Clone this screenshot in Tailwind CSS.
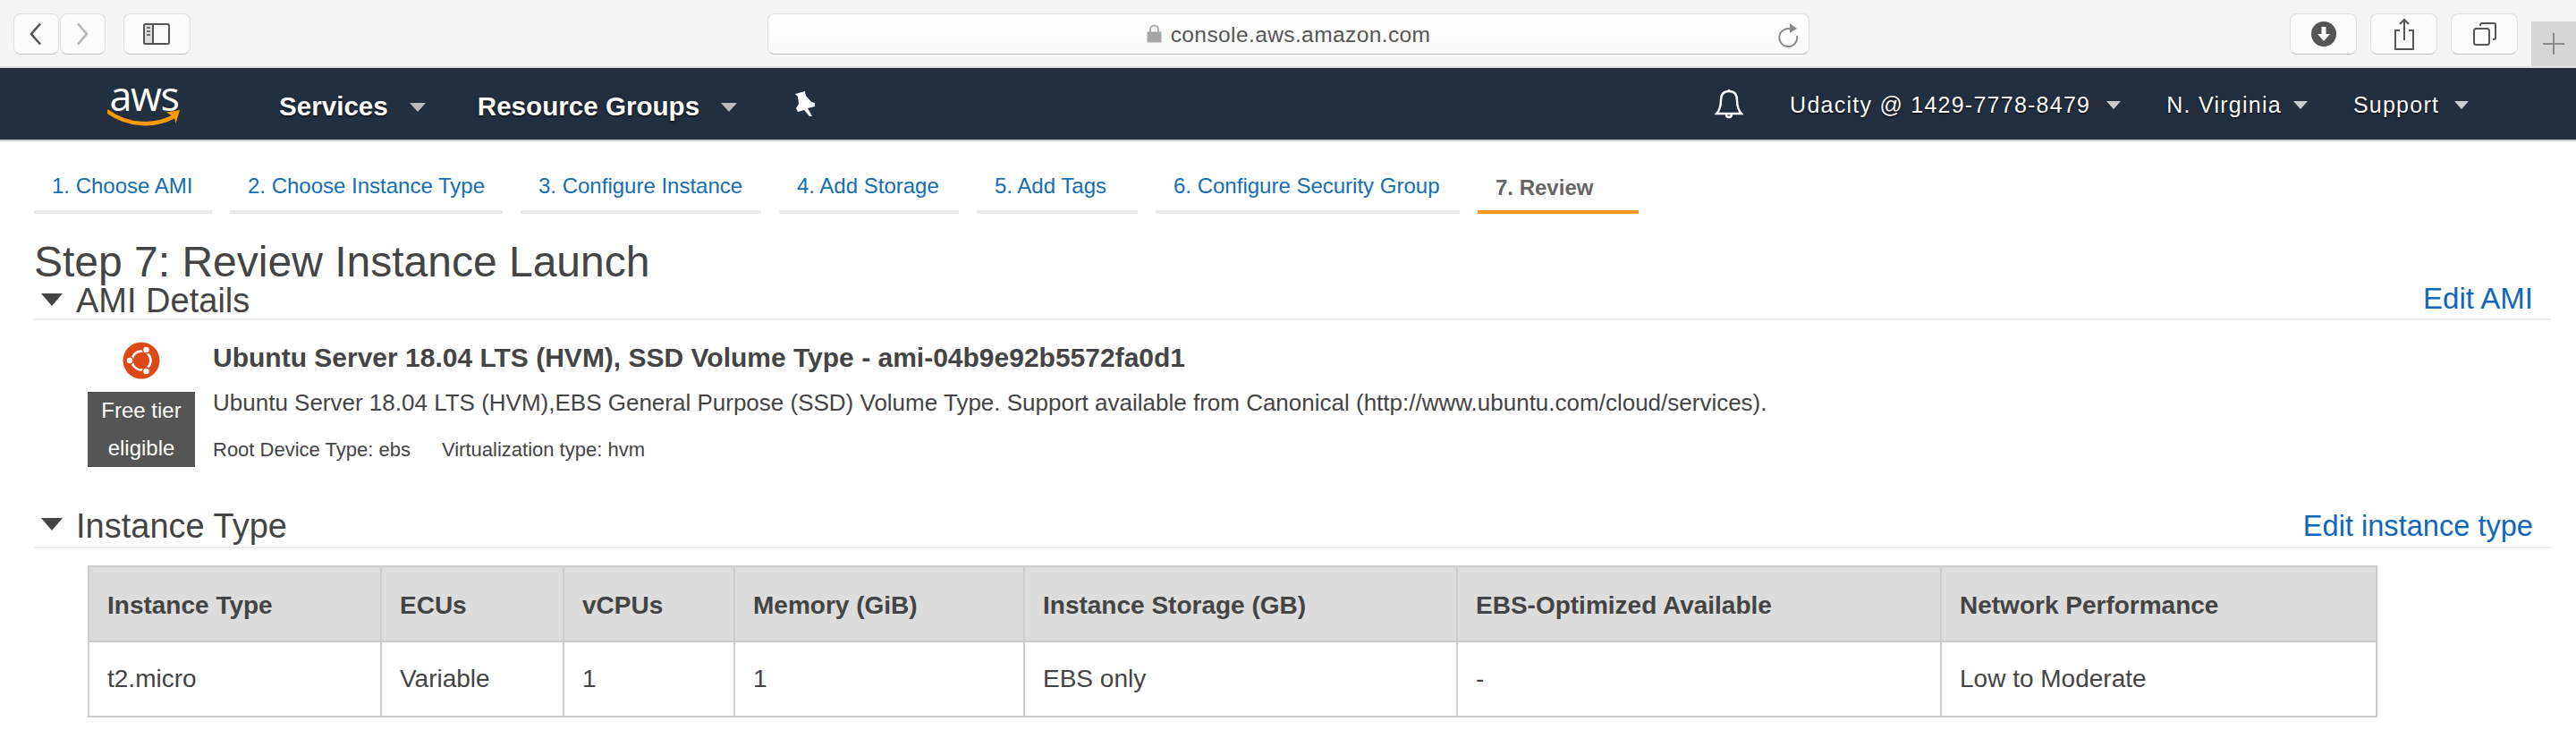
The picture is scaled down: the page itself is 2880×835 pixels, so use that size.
<!DOCTYPE html>
<html lang="en">
<head>
    <meta charset="UTF-8">
    <title>EC2 Management Console</title>
    <script src="https://cdn.jsdelivr.net/npm/@tailwindcss/browser@4"></script>
</head>
<body class="bg-white font-['Liberation_Sans',sans-serif] text-[#444] overflow-hidden">

    <!-- Browser toolbar -->
    <div class="flex items-start h-[76px] bg-[#f5f5f5] border-b-2 border-[#e2e2e2] pl-[15px]">
        <button class="flex items-center justify-center w-[51px] h-[46px] mt-[15px] rounded-lg bg-[#fbfbfb] border border-[#e0e0e0] border-b-[#c4c4c4]">
            <svg width="16" height="26" viewBox="0 0 16 26" fill="none" stroke="#555" stroke-width="2.6"><path d="M13 1.5 3 13l10 11.5"/></svg>
        </button>
        <button class="flex items-center justify-center w-[51px] h-[46px] mt-[15px] ml-[1px] rounded-lg bg-[#fbfbfb] border border-[#e0e0e0] border-b-[#c4c4c4]">
            <svg width="16" height="26" viewBox="0 0 16 26" fill="none" stroke="#b5b5b5" stroke-width="2.6"><path d="M3 1.5 13 13 3 24.5"/></svg>
        </button>
        <button class="flex items-center justify-center w-[75px] h-[46px] mt-[15px] ml-[20px] rounded-lg bg-[#fbfbfb] border border-[#e0e0e0] border-b-[#c4c4c4]">
            <svg width="30" height="24" viewBox="0 0 30 24" fill="none" stroke="#555" stroke-width="2"><rect x="1" y="1" width="28" height="22" rx="1.5"/><path d="M11 1v22"/><path d="M4 5h4M4 9h4M4 13h4" stroke="#777" stroke-width="2"/><rect x="2" y="2" width="8" height="20" fill="#555" opacity=".18" stroke="none"/></svg>
        </button>

        <!-- Address bar -->
        <div class="relative flex items-center justify-center w-[1166px] h-[46px] mt-[15px] ml-[645px] rounded-lg bg-gradient-to-b from-white to-[#f9f9f9] border border-[#e0e0e0] border-b-[#c0c0c0]">
            <svg class="mr-[10px] mb-[2px]" width="17" height="21" viewBox="0 0 17 21"><path d="M4 9V6a4.500 4.500 0 0 1 9 0v3" fill="none" stroke="#aaa" stroke-width="2"/><rect x="0.500" y="8.500" width="16" height="12" fill="#a5a5a5"/></svg>
            <span class="text-[24.5px] text-[#555] tracking-[0.4px] leading-none mt-[3px]">console.aws.amazon.com</span>
            <svg class="absolute right-[11px] top-[9px]" width="24" height="28" viewBox="0 0 24 28" fill="none"><path d="M15 7.500A10 10 0 1 0 22 15" stroke="#8a8a8a" stroke-width="2"/><path d="M14 1l8 6-8 5z" fill="#8a8a8a"/></svg>
        </div>

        <button class="flex items-center justify-center w-[75px] h-[46px] mt-[15px] ml-[537px] rounded-lg bg-[#fbfbfb] border border-[#e0e0e0] border-b-[#c4c4c4]">
            <svg width="28" height="28" viewBox="0 0 28 28"><circle cx="14" cy="14" r="14" fill="#555"/><path d="M11.500 6h5v8h4.500L14 22 7 14h4.500z" fill="#fff"/></svg>
        </button>
        <button class="flex items-center justify-center w-[75px] h-[46px] mt-[15px] ml-[15px] rounded-lg bg-[#fbfbfb] border border-[#e0e0e0] border-b-[#c4c4c4]">
            <svg width="24" height="36" viewBox="0 0 24 36" fill="none" stroke="#555" stroke-width="2"><path d="M7 14H2v21h20V14h-5"/><path d="M12 25V2M7 7l5-5 5 5"/></svg>
        </button>
        <button class="flex items-center justify-center w-[75px] h-[46px] mt-[15px] ml-[15px] rounded-lg bg-[#fbfbfb] border border-[#e0e0e0] border-b-[#c4c4c4]">
            <svg width="26" height="26" viewBox="0 0 26 26" fill="none" stroke="#555" stroke-width="2"><rect x="1" y="7" width="17" height="18" rx="2.500"/><path d="M8 4V3a2 2 0 0 1 2-2h13a2 2 0 0 1 2 2v14a2 2 0 0 1-2 2h-1"/></svg>
        </button>
        <div class="flex items-center justify-center w-[50px] h-[50px] mt-[24px] ml-[15px] bg-[#d6d6d6]">
            <svg width="24" height="24" viewBox="0 0 24 24" stroke="#8c8c8c" stroke-width="2"><path d="M12 0v24M0 12h24"/></svg>
        </div>
    </div>

    <!-- AWS nav -->
    <nav class="flex items-center h-[82px] bg-[#232f3e] border-b-2 border-[#cfcfcf] text-white [text-shadow:0_1px_2px_#000]">
        <div class="flex flex-col items-center w-[82px] ml-[120px] mt-[-3px]">
            <span class="font-['Open_Sans',sans-serif] text-[45px] leading-[36px] tracking-[-1.5px] h-[36px] [text-shadow:none]">aws</span>
            <svg class="mt-[-3px]" width="82" height="19" viewBox="0 0 82 19" fill="none"><path d="M1 3c22 16 52 17 74 5" stroke="#f90" stroke-width="4.500" stroke-linecap="round"/><path d="M66 3.500 81 1l-4.500 15-1.500-7z" fill="#f90"/></svg>
        </div>
        <span class="ml-[110px] mt-[6px] text-[29.6px] font-bold">Services</span>
        <svg class="ml-[24px] mt-[8px]" width="18" height="10" viewBox="0 0 18 10"><path d="M0 0h18L9 10z" fill="#bbb"/></svg>
        <span class="ml-[58px] mt-[6px] text-[29.6px] font-bold">Resource Groups</span>
        <svg class="ml-[24px] mt-[8px]" width="18" height="10" viewBox="0 0 18 10"><path d="M0 0h18L9 10z" fill="#bbb"/></svg>
        <svg class="ml-[63px]" width="24" height="28" viewBox="0 0 24 28"><path d="M2 3 13 0 14 5 20 12 24 13 24 17 16 19 21 28 18 28 12 21 5 23 3 19 6 14 5 6z" fill="#fff"/></svg>
        <svg class="ml-[1006px]" width="32" height="34" viewBox="0 0 32 34" fill="none" stroke="#fff" stroke-width="2.400"><path d="M16 3c6 0 9 4 9 10 0 7 1 11 5 15H2c4-4 5-8 5-15 0-6 3-10 9-10z"/><path d="M16 1v2M13 29c0 4 6 4 6 0"/></svg>
        <span class="ml-[52px] mt-[3px] text-[25px] tracking-[1.25px]">Udacity @ 1429-7778-8479</span>
        <svg class="ml-[18px] mt-[3px]" width="16" height="9" viewBox="0 0 16 9"><path d="M0 0h16L8 9z" fill="#ccc"/></svg>
        <span class="ml-[51px] mt-[3px] text-[25px] tracking-[1.25px]">N. Virginia</span>
        <svg class="ml-[13px] mt-[3px]" width="16" height="9" viewBox="0 0 16 9"><path d="M0 0h16L8 9z" fill="#ccc"/></svg>
        <span class="ml-[51px] mt-[3px] text-[25px] tracking-[1.25px]">Support</span>
        <svg class="ml-[17px] mt-[3px]" width="16" height="9" viewBox="0 0 16 9"><path d="M0 0h16L8 9z" fill="#ccc"/></svg>
    </nav>

    <!-- Wizard steps -->
    <div class="flex gap-[20px] ml-[38px] mt-[24px] text-[24px] text-[#146eb4] leading-[28px]">
        <a href="#" class="w-[199px] pl-[20px] pt-[12px] pb-[13px] border-b-4 border-[#eaeaea]">1. Choose AMI</a>
        <a href="#" class="w-[305px] pl-[20px] pt-[12px] pb-[13px] border-b-4 border-[#eaeaea]">2. Choose Instance Type</a>
        <a href="#" class="w-[269px] pl-[20px] pt-[12px] pb-[13px] border-b-4 border-[#eaeaea]">3. Configure Instance</a>
        <a href="#" class="w-[201px] pl-[20px] pt-[12px] pb-[13px] border-b-4 border-[#eaeaea]">4. Add Storage</a>
        <a href="#" class="w-[180px] pl-[20px] pt-[12px] pb-[13px] border-b-4 border-[#eaeaea]">5. Add Tags</a>
        <a href="#" class="w-[340px] pl-[20px] pt-[12px] pb-[13px] border-b-4 border-[#eaeaea]">6. Configure Security Group</a>
        <a href="#" class="w-[180px] pl-[20px] pt-[14px] pb-[11px] border-b-4 border-[#f7981d] font-bold text-[#666]">7. Review</a>
    </div>

    <main class="ml-[38px] w-[2814px]">
        <h1 class="mt-[26px] text-[48px] leading-[56px] text-[#444]">Step 7: Review Instance Launch</h1>

        <!-- AMI Details -->
        <div class="flex items-center h-[40px] mt-[-5px] pr-[20px] border-b-2 border-[#eaeaea] box-content">
            <svg class="ml-[8px] mt-[-3px]" width="24" height="14" viewBox="0 0 24 14"><path d="M0 0h24L12 14z" fill="#444"/></svg>
            <h2 class="ml-[15px] text-[38px] leading-[40px]">AMI Details</h2>
            <a href="#" class="ml-auto mt-[-4px] text-[33px] leading-[40px] text-[#1166bb]">Edit AMI</a>
        </div>

        <div class="flex mt-[24px] ml-[60px]">
            <div class="flex flex-col items-center w-[120px]">
                <svg width="42" height="42" viewBox="0 0 42 42">
                    <circle cx="21" cy="21" r="20.500" fill="#dd4814"/>
                    <circle cx="21" cy="21" r="10.500" fill="none" stroke="#fff" stroke-width="2.600"/>
                    <circle cx="26.500" cy="9" r="4" fill="#fff" stroke="#dd4814" stroke-width="1.500"/>
                    <circle cx="26.500" cy="33" r="4" fill="#fff" stroke="#dd4814" stroke-width="1.500"/>
                    <circle cx="8" cy="21" r="4" fill="#fff" stroke="#dd4814" stroke-width="1.500"/>
                </svg>
                <div class="w-[120px] h-[84px] mt-[14px] bg-[#555] text-white text-center text-[24px] leading-[42px]">Free tier eligible</div>
            </div>
            <div class="ml-[20px]">
                <p class="font-bold text-[30px] leading-[36px]">Ubuntu Server 18.04 LTS (HVM), SSD Volume Type - ami-04b9e92b5572fa0d1</p>
                <p class="mt-[14px] text-[26px] leading-[36px]">Ubuntu Server 18.04 LTS (HVM),EBS General Purpose (SSD) Volume Type. Support available from Canonical (http://www.ubuntu.com/cloud/services).</p>
                <p class="mt-[21px] text-[22px] leading-[28px]"><span>Root Device Type: ebs</span><span class="ml-[35px]">Virtualization type: hvm</span></p>
            </div>
        </div>

        <!-- Instance Type -->
        <div class="flex items-center h-[40px] mt-[46px] pr-[20px] border-b-2 border-[#eaeaea] box-content pb-[3px]">
            <svg class="ml-[8px] mt-[-4px]" width="24" height="14" viewBox="0 0 24 14"><path d="M0 0h24L12 14z" fill="#444"/></svg>
            <h2 class="ml-[15px] text-[38px] leading-[40px]">Instance Type</h2>
            <a href="#" class="ml-auto text-[32.6px] leading-[40px] text-[#1166bb]">Edit instance type</a>
        </div>

        <table class="mt-[19px] ml-[60px] w-[2558px] table-fixed border-collapse border-2 border-[#ccc] text-[28px]">
            <colgroup>
                <col class="w-[327px]"><col class="w-[204px]"><col class="w-[191px]"><col class="w-[324px]"><col class="w-[484px]"><col class="w-[541px]"><col class="w-[487px]">
            </colgroup>
            <thead class="bg-[#dcdcdc]">
                <tr class="h-[84px]">
                    <th class="px-[20px] pt-[3px] text-left font-bold border-2 border-[#ccc]">Instance Type</th>
                    <th class="px-[20px] pt-[3px] text-left font-bold border-2 border-[#ccc]">ECUs</th>
                    <th class="px-[20px] pt-[3px] text-left font-bold border-2 border-[#ccc]">vCPUs</th>
                    <th class="px-[20px] pt-[3px] text-left font-bold border-2 border-[#ccc]">Memory (GiB)</th>
                    <th class="px-[20px] pt-[3px] text-left font-bold border-2 border-[#ccc]">Instance Storage (GB)</th>
                    <th class="px-[20px] pt-[3px] text-left font-bold border-2 border-[#ccc]">EBS-Optimized Available</th>
                    <th class="px-[20px] pt-[3px] text-left font-bold border-2 border-[#ccc]">Network Performance</th>
                </tr>
            </thead>
            <tbody>
                <tr class="h-[84px]">
                    <td class="px-[20px] border-2 border-[#ccc]">t2.micro</td>
                    <td class="px-[20px] border-2 border-[#ccc]">Variable</td>
                    <td class="px-[20px] border-2 border-[#ccc]">1</td>
                    <td class="px-[20px] border-2 border-[#ccc]">1</td>
                    <td class="px-[20px] border-2 border-[#ccc]">EBS only</td>
                    <td class="px-[20px] border-2 border-[#ccc]">-</td>
                    <td class="px-[20px] border-2 border-[#ccc]">Low to Moderate</td>
                </tr>
            </tbody>
        </table>
    </main>

</body>
</html>
